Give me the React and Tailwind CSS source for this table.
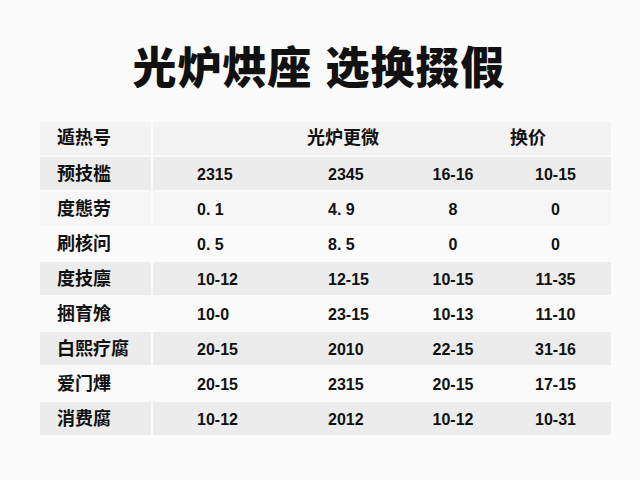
const rows = [
  ["预技槛", "2315", "2345", "16-16", "10-15"],
  ["度態劳", "0. 1", "4. 9", "8", "0"],
  ["刷核问", "0. 5", "8. 5", "0", "0"],
  ["度技廪", "10-12", "12-15", "10-15", "11-35"],
  ["捆育飧", "10-0", "23-15", "10-13", "11-10"],
  ["白熙疗腐", "20-15", "2010", "22-15", "31-16"],
  ["爱门熚", "20-15", "2315", "20-15", "17-15"],
  ["消费腐", "10-12", "2012", "10-12", "10-31"],
];

// alternating backgrounds as in the picture
const shades = ["bg-[#ececec]", "bg-[#f6f6f6]", "bg-[#fbfbfb]", "bg-[#ececec]", "bg-[#fafafa]", "bg-[#ececec]", "bg-[#fafafa]", "bg-[#ececec]"];

export default function App() {
  return (
    <div
      className="w-[640px] h-[480px] bg-[#fbfbfb] text-[#111] flex flex-col items-center pt-[47px]"
      style={{ fontFamily: '"Liberation Sans", "Noto Sans CJK SC", sans-serif' }}
    >
      <h1 className="text-[44px] leading-none font-black tracking-[1px] ml-[-2px]">
        光炉烘座 选换掇假
      </h1>

      <div className="w-[571px] mt-[29px] flex flex-col gap-[2px] ml-[11px]">
        <div className="h-[35px] pt-[2px] grid grid-cols-[111px_1fr] gap-[2px] text-[18px] font-bold">
          <div className="bg-[#f3f3f3] flex items-center pl-[17px]">遁热号</div>
          <div className="bg-[#f3f3f3] grid grid-cols-[130px_123px_94px_111px] items-center">
            <div />
            <div className="pl-[24px] whitespace-nowrap">光炉更微</div>
            <div />
            <div className="pl-[10px]">换价</div>
          </div>
        </div>

        {rows.map((r, i) => (
          <div key={i} className="h-[33px] grid grid-cols-[111px_1fr] gap-[2px]">
            <div className={`${shades[i]} flex items-center pl-[17px] pt-[2px] text-[18px] font-bold`}>{r[0]}</div>
            <div className={`${shades[i]} grid grid-cols-[130px_123px_94px_111px] items-center pt-[2px] text-[16px] font-bold`}>
              <div className="pl-[44px]">{r[1]}</div>
              <div className="pl-[45px]">{r[2]}</div>
              <div className="text-center">{r[3]}</div>
              <div className="text-center">{r[4]}</div>
            </div>
          </div>
        ))}
      </div>
    </div>
  );
}
